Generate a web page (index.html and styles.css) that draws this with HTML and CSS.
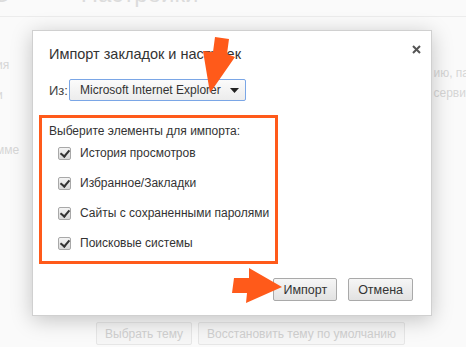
FILE: index.html
```html
<!DOCTYPE html>
<html>
<head>
  <title>Настройки</title>
  <meta name="viewport" content="width=device-width, initial-scale=1">
  <link rel="stylesheet" href="styles.css">
</head>
<body>

  <div class="page">
    <div class="page-header">
      <span class="page-side">О</span>
      <span class="page-title">Настройки</span>
    </div>

    <div class="page-body">
      <div class="left-col">
        <p class="faded l1">ия</p>
        <p class="faded l2">и</p>
        <p class="faded l3">мме</p>
      </div>
      <div class="right-col">
        <p class="faded r1">ию, па</p>
        <p class="faded r2">серви</p>
      </div>
    </div>

    <div class="page-buttons">
      <button class="page-button">Выбрать тему</button>
      <button class="page-button">Восстановить тему по умолчанию</button>
    </div>
  </div>

  <div class="dialog">
    <div class="dialog-head">
      <p class="dialog-title">Импорт закладок и настроек</p>
      <span class="close">
        <svg width="9" height="9" viewBox="0 0 9 9">
          <path d="M1 1 L8 8 M8 1 L1 8" stroke="#555" stroke-width="2"/>
        </svg>
      </span>
    </div>

    <div class="from-row">
      <span class="from-label">Из:</span>
      <div class="select">
        <span>Microsoft Internet Explorer</span>
        <svg width="9" height="5" viewBox="0 0 9 5">
          <path d="M0 0 L9 0 L4.5 5 Z" fill="#222"/>
        </svg>
      </div>
    </div>

    <div class="items-box">
      <p class="items-title">Выберите элементы для импорта:</p>
      <label class="item"><span class="check"></span>История просмотров</label>
      <label class="item"><span class="check"></span>Избранное/Закладки</label>
      <label class="item"><span class="check"></span>Сайты с сохраненными паролями</label>
      <label class="item"><span class="check"></span>Поисковые системы</label>
    </div>

    <div class="dialog-buttons">
      <button class="dialog-button">Импорт</button>
      <button class="dialog-button">Отмена</button>
    </div>
  </div>

  <!-- annotation arrows -->
  <svg class="arrow arrow-down" width="40" height="60" viewBox="0 0 40 60">
    <path d="M15 0 L29 2 L27 17 L35 20 L10 56 L3 14 L13 15 Z" fill="#ff5a1a"/>
  </svg>
  <svg class="arrow arrow-right" width="55" height="40" viewBox="0 0 55 40">
    <path d="M2 10 L17 10 L17 0 L50 19 L14 35 L15 25 L0 25 Z" fill="#ff5a1a"/>
  </svg>

</body>
</html>
```

FILE: styles.css
```css
body {
  margin: 0;
  background-color: #fafafa;
  font-family: "Liberation Sans", Arial, sans-serif;
  color: #333;
  width: 466px;
  height: 347px;
  overflow: hidden;
  position: relative;
}

p {
  margin: 0;
  white-space: nowrap;
}

.page {
  height: 347px;
  display: flex;
  flex-direction: column;
}

.page-header {
  height: 16px;
  border-bottom: 1px solid #ececec;
  display: flex;
  align-items: flex-end;
  overflow: hidden;
}

.page-side,
.page-title {
  color: #dcdcdc;
  font-size: 24px;
  line-height: 24px;
  margin-bottom: 10px;
}

.page-side {
  margin-left: -8px;
}

.page-title {
  margin-left: 70px;
}

.page-body {
  flex: 1;
  display: flex;
  justify-content: space-between;
}

.faded {
  color: #d6d6d6;
  font-size: 12px;
  line-height: 16px;
}

.left-col {
  margin-left: -4px;
}

.l1 { margin-top: 40px; }
.l2 { margin-top: 14px; }
.l3 { margin-top: 39px; }

.right-col {
  margin-right: -3px;
}

.r1 { margin-top: 48px; }
.r2 { margin-top: 4px; }

.page-buttons {
  display: flex;
  gap: 6px;
  margin: 0 0 2px 96px;
}

.page-button {
  font-family: inherit;
  font-size: 12px;
  color: #d0d0d0;
  background-color: #f6f6f6;
  border: 1px solid #e6e6e6;
  border-radius: 2px;
  height: 23px;
  padding: 0 8px;
  white-space: nowrap;
}

.dialog {
  position: absolute;
  left: 32px;
  top: 30px;
  width: 400px;
  height: 286px;
  box-sizing: border-box;
  background-color: white;
  border: 1px solid #d0d0d0;
  box-shadow: 0 4px 20px rgba(0, 0, 0, 0.22);
  padding: 12px 18px 0 16px;
  display: flex;
  flex-direction: column;
}

.dialog-head {
  display: flex;
  justify-content: space-between;
  align-items: flex-start;
}

.dialog-title {
  font-size: 14.5px;
  line-height: 20px;
  color: #333;
  margin-top: 1px;
}

.close {
  margin-top: -3px;
  margin-right: -8px;
}

.from-row {
  display: flex;
  align-items: center;
  margin-top: 15px;
  font-size: 13px;
  white-space: nowrap;
}

.from-label {
  width: 20px;
  color: #444;
}

.select {
  width: 177px;
  height: 22px;
  box-sizing: border-box;
  border: 1px solid #7aa6e6;
  border-radius: 2px;
  background: linear-gradient(#fbfbfb, #ececec);
  display: flex;
  align-items: center;
  justify-content: space-between;
  padding: 0 6px 0 10px;
  color: #333;
  font-size: 12px;
}

.items-box {
  margin: 14px 0 0 -10px;
  width: 239px;
  height: 149px;
  box-sizing: border-box;
  border: 3px solid #ff5a1a;
  padding: 4px 0 0 7px;
  font-size: 12px;
}

.items-title {
  line-height: 18px;
  color: #333;
}

.item {
  display: flex;
  align-items: center;
  height: 30px;
  margin-left: 9px;
  color: #333;
  white-space: nowrap;
}

.item:first-of-type {
  margin-top: -2px;
}

.check {
  width: 13px;
  height: 13px;
  flex-shrink: 0;
  box-sizing: border-box;
  border: 1px solid #a8a8a8;
  border-radius: 2px;
  background: linear-gradient(#f4f4f4, #d8d8d8);
  margin-right: 9px;
  position: relative;
}

.check::after {
  content: "";
  position: absolute;
  left: 3px;
  top: 0px;
  width: 4px;
  height: 7px;
  border: solid #333;
  border-width: 0 2px 2px 0;
  transform: rotate(40deg);
}

.dialog-buttons {
  display: flex;
  justify-content: flex-end;
  gap: 11px;
  margin-top: 14px;
}

.dialog-button {
  font-family: inherit;
  font-size: 12.5px;
  color: #333;
  background: linear-gradient(#f6f6f6, #e2e2e2);
  border: 1px solid #a9a9a9;
  border-radius: 2px;
  height: 23px;
  padding: 0 9px;
}

.arrow {
  position: absolute;
}

.arrow-down {
  left: 200px;
  top: 37px;
}

.arrow-right {
  left: 232px;
  top: 268px;
}
```
